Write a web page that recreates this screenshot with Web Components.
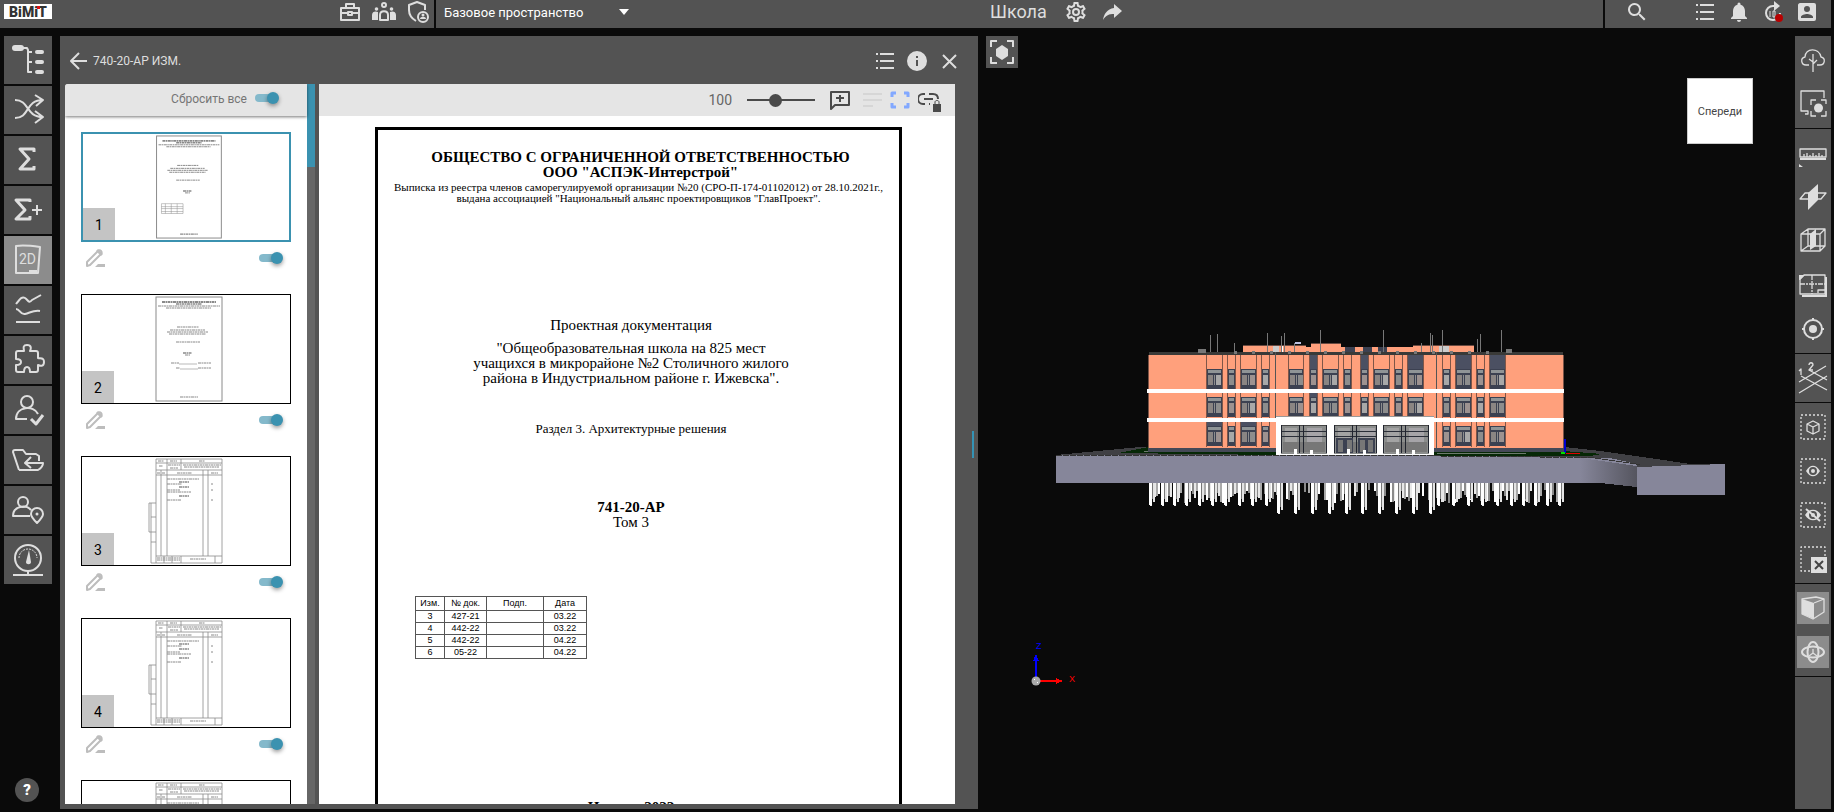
<!DOCTYPE html>
<html lang="ru">
<head>
<meta charset="utf-8">
<title>BiMiT — Школа</title>
<style>
  html, body { margin: 0; height: 100%; background: #0a0a0a; }
  body { font-family: Roboto, "Liberation Sans", sans-serif; font-size: 13px; color: #dedede; overflow: hidden; }
</style>
</head>
<body>
<bim-app></bim-app>

<script>
const ICONS = {
  /* header, 24px grid */
  briefcase: '<path d="M3 8h18v12H3zM8 8V4h8v4M3 13h7M14 13h7M10 12h4v3h-4z"/>',
  people: '<circle cx="12" cy="5" r="2"/><path d="M8 20v-5c0-5 8-5 8 0v5z"/><g class="f"><circle cx="4.500" cy="9" r="1.800"/><circle cx="19.500" cy="9" r="1.800"/><path d="M0 20v-5c0-4 4-4 6-3v8zM24 20v-5c0-4-4-4-6-3v8z"/></g>',
  shield: '<path d="M10 21C5 18 3 14 3 10V5l8-3 8 3v5"/><circle cx="17" cy="17" r="5"/><g class="f"><circle cx="17" cy="15" r="1.500"/><path d="M14 19c0-3 6-3 6 0z"/></g>',
  gear: '<path class="f" fill-rule="evenodd" d="M19.430 12.980c.040-.320.070-.640.070-.980 0-.340-.030-.660-.070-.980l2.110-1.650c.190-.150.240-.420.120-.640l-2-3.460c-.090-.160-.260-.250-.440-.250-.060 0-.120.010-.170.030l-2.490 1c-.520-.400-1.080-.730-1.690-.980l-.380-2.650C14.460 2.180 14.250 2 14 2h-4c-.250 0-.460.180-.490.420l-.380 2.650c-.610.250-1.170.590-1.690.980l-2.490-1c-.060-.020-.120-.030-.180-.030-.170 0-.340.090-.430.250l-2 3.460c-.130.220-.070.490.120.640l2.110 1.650c-.040.320-.070.650-.070.980 0 .330.030.660.070.980l-2.110 1.650c-.190.150-.240.420-.120.640l2 3.460c.090.160.260.250.440.250.060 0 .120-.010.170-.030l2.490-1c.520.400 1.080.730 1.690.980l.380 2.650c.030.240.240.420.490.420h4c.250 0 .460-.180.490-.420l.380-2.650c.610-.250 1.170-.590 1.690-.980l2.490 1c.060.020.120.030.180.030.170 0 .340-.090.430-.250l2-3.460c.120-.220.070-.490-.120-.640zM17.450 12.730l-.140 1.130 1.970 1.540-.700 1.210-2.310-.930-.900.680c-.430.320-.840.560-1.250.730l-1.060.430-.360 2.480h-1.400l-.350-2.480-1.060-.430c-.430-.180-.830-.410-1.230-.710l-.910-.700-2.330.940-.700-1.210 1.970-1.540-.140-1.130c-.040-.490-.040-.980 0-1.470l.140-1.130-1.970-1.540.700-1.210 2.310.930.900-.680c.430-.320.840-.560 1.250-.730l1.060-.430.360-2.480h1.390l.350 2.480 1.060.430c.430.180.830.410 1.230.710l.910.700 2.330-.940.700 1.210-1.960 1.550.140 1.130c.040.490.040.980 0 1.460z"/><circle cx="12" cy="12" r="3"/>',
  share: '<path class="f" d="M14 4l8 7-8 7v-4c-5 0-8 1-11 6 1-6 4-11 11-12z"/>',
  caret: '<path class="f" d="M7 9h10l-5 6z"/>',
  search: '<path class="f" d="M15.500 14h-.790l-.280-.270A6.500 6.500 0 1 0 13.730 14.430l.270.280v.790l5 5L20.500 19zM9.500 14A4.500 4.500 0 1 1 9.500 5a4.500 4.500 0 0 1 0 9z"/>',
  list: '<path class="f" d="M3 4h2v2H3zM7 4h14v2H7zM3 11h2v2H3zM7 11h14v2H7zM3 18h2v2H3zM7 18h14v2H7z"/>',
  bell: '<path class="f" d="M12 22a2 2 0 0 0 2-2h-4c0 1.100.900 2 2 2zM18 16v-5c0-3.070-1.630-5.640-4.500-6.320V4a1.500 1.500 0 0 0-3 0v.680C7.640 5.360 6 7.920 6 11v5l-2 2v1h16v-1z"/>',
  timer: '<path d="M19 13a7 7 0 1 1-7-7h3"/><path class="f" d="M13 1l6 5-6 5z"/><path d="M9 11v6M12 11h2v6h-2z" stroke-width="1"/><circle cx="18" cy="18" r="4" style="fill:#b80000;stroke:none"/>',
  account: '<path class="f" fill-rule="evenodd" d="M5 3h14a2 2 0 0 1 2 2v14a2 2 0 0 1-2 2H5a2 2 0 0 1-2-2V5c0-1 1-2 2-2zM15 9a3 3 0 1 0-6 0 3 3 0 0 0 6 0zM6 18h12v-1c0-2-4-3-6-3s-6 1-6 3z"/>',
  back: '<path d="M20 12H5M12 4l-8 8 8 8"/>',
  info: '<path class="f" fill-rule="evenodd" d="M12 2a10 10 0 1 0 0 20 10 10 0 0 0 0-20zM13 17h-2v-6h2zM13 9h-2V7h2z"/>',
  close: '<path d="M6 6l13 13M19 6L6 19"/>',
  pen: '<path d="M4 20v-4L15 5c2-2 5 1 3 3L7 19l-3 1z"/><path class="f" d="M15 3l5 5-2 2-5-5zM15 18h7v3H12z"/>',
  comment: '<path d="M3 21V4h18v13H7z"/><path d="M12 7v7M8 10h8"/>',
  lines: '<path d="M5 6h19M5 12h19M5 18h10"/>',
  fit: '<path d="M4 9V5h4M16 5h4v4M20 15v4h-4M8 19H4v-4" stroke-width="3"/>',
  linklock: '<path d="M7 6H5a5 5 0 0 0 0 10h2M11 6h4c3 0 5 2 5 5M6 11h9M11 16h1"/><path class="f" d="M15 16h8v8h-8z"/><path d="M17 16v-2c0-2 4-2 4 0v2" stroke-width="1"/>',
  focus: '<path d="M5 11V5h6M21 5h6v6M27 21v6h-6M11 27H5v-6"/><path class="f" d="M16 9l6 4v7l-6 4-6-4v-7z"/>',
  /* left rail, 48px grid */
  tree: '<rect class="f" x="8" y="9" width="12" height="6" rx="3"/><path d="M19 12h4l1 2v22h4M24 16h4M24 26h4"/><g class="f"><rect x="31" y="14" width="9" height="4" rx="2"/><rect x="31" y="24" width="9" height="4" rx="2"/><rect x="31" y="34" width="9" height="4" rx="2"/></g>',
  shuffle: '<path d="M11 14c15 0 10 17 28 17M11 32c15 0 10-18 28-18M31 9l8 5-7 6M31 25l8 6-8 6"/>',
  sigma: '<path d="M30 16v-3H16l9 10-9 10h14v-3" stroke-width="3"/>',
  sigmaplus: '<path d="M26 16v-2H12l9 10-9 9h14v-3" stroke-width="3"/><path d="M33 19v10M28 24h10"/>',
  plan2d: '<path d="M12 10c6-1 17 0 24 1l-2 26H12zM25 35h8"/><text x="15" y="28" font-size="14" class="f">2D</text>',
  charts: '<path d="M12 18c4-5 6-8 9-6s4 6 7 2l9-5M12 23c4 0 4 6 9 5s8-4 15-3M12 36h24"/>',
  puzzle: '<path d="M12 17q0-2 2-2h6c0-2-2-6 3-6s4 4 3 6h6q2 0 2 2v5c2 1 6-1 6 4s-4 4-6 3v5q0 2-2 2h-6c0-2 0-5-3-5s-3 3-3 5h-6q-2 0-2-2v-5c2 0 5 0 5-3s-3-3-5-3z"/>',
  usercheck: '<circle cx="23" cy="16" r="6"/><path d="M23 33H12c0-13 18-14 22-5"/><path d="M27 33l5 5 7-9" stroke-width="3"/>',
  folder: '<path d="M15 34L9 16q0-2 2-2h8l3 4h10l3 2v5M15 34h19q5-3 5-7H22M27 21l-6 6 6 5"/>',
  userpin: '<circle cx="19" cy="16" r="5"/><path d="M26 30H9c0-10 13-12 18-6M33 37c-4-4-6-6-6-9a6 6 0 0 1 12 0c0 3-3 6-6 9z"/><circle class="f" cx="33" cy="28" r="1.500"/>',
  gauge: '<circle cx="24" cy="22" r="13"/><path d="M24 35v4M9 39h30"/><path d="M15 22a9 9 0 0 1 18 0" stroke-dasharray="2 1" stroke-width="1"/><path class="f" d="M25 14l2 12c0 3-5 3-5 0z"/>',
  /* right rail, 32px grid */
  leaf: '<path d="M12 21H9c-5 0-6-7-1-8 0-9 14-10 16 0 5 1 4 8-1 8h-3M16 10v18M16 18l-4-3M16 20l4-4"/>',
  screen: '<path d="M27 10V3H4v20h7v3H8"/><path d="M14 17v-5h5M24 12h5v4M29 23v5h-5M19 28h-5v-5"/><circle class="f" cx="21.500" cy="20" r="4.500"/>',
  ruler: '<path d="M3 12h26v8H3zM7 20v-3M10 20v-4M13 20v-2M16 20v-4M19 20v-2M22 20v-4M25 20v-2"/><path class="f" d="M3 21h26v2H3zM2 27l4 3H2z"/>',
  section: '<path d="M3 18h21l5-6H8z"/><path class="f" d="M11 12l10-9v16L11 29z"/>',
  clip: '<path d="M4 9l7-5h17v17l-5 5H4zM4 9h19v17M23 9l5-5M11 4v17L4 26M11 21h17"/><path class="f" d="M13 9l6-5v17l-6 4z"/>',
  sheet: '<path d="M3 10l4-4h21v19H3z"/><path d="M3 15h25M15 6v19" stroke-dasharray="5 1 2 1"/><path class="f" d="M5 26h23V8h2v20H5zM2 6h6l-5 5H2z"/><path d="M21 24v-3h7"/>',
  target: '<circle cx="16" cy="16" r="9" stroke-width="2"/><circle class="f" cx="16" cy="16" r="4"/><path d="M16 5v3M16 24v3M5 16h3M24 16h3" stroke-width="2"/>',
  grid: '<path d="M2 31L30 14M2 20L29 4M4 14l26 14M12 8l18 10"/><path d="M2 9l2-2v6M12 3c0-3 4-3 4 0l-4 5h4"/>',
  cube: '<path d="M4 4h24v24H4z" stroke-dasharray="2 2"/><path d="M16 10l6 3v7l-6 3-6-3v-7zM10 13l6 3 6-3M16 16v7"/>',
  eye: '<path d="M4 4h24v24H4z" stroke-dasharray="2 2"/><path class="f" fill-rule="evenodd" d="M9 16c4-7 10-7 14 0-4 7-10 7-14 0zM20 16a4 4 0 1 0-8 0 4 4 0 0 0 8 0z"/><circle class="f" cx="16" cy="16" r="2"/>',
  eyeoff: '<path d="M4 4h24v24H4z" stroke-dasharray="2 2"/><path class="f" fill-rule="evenodd" d="M8 16c4-7 12-7 16 0-4 7-12 7-16 0zM20 16a4 4 0 1 0-8 0 4 4 0 0 0 8 0z"/><circle class="f" cx="16" cy="16" r="2"/><path d="M9 10l14 12" stroke-width="2"/>',
  clearsel: '<path d="M13 28H4V4h24v9" stroke-dasharray="2 2"/><path class="f" d="M14 14h16v16H14z"/><path d="M18 18l8 8M26 18l-8 8" style="stroke:#444;stroke-width:2"/>',
  solid: '<path d="M5 7l14-2 8 2v13l-11 7-11-5z"/><path class="f" d="M5 7l12 4v16L5 22z"/><path d="M17 11l10-4"/>',
  orbit: '<ellipse cx="16" cy="16" rx="11" ry="5.500" stroke-width="2"/><ellipse cx="16" cy="16" rx="5.500" ry="10" stroke-width="2"/><path d="M16 13v4l-4 3M16 17l4 3"/>'
};

const define = (name, html, setup) => {
  const tpl = document.createElement('template');
  tpl.innerHTML = html;
  customElements.define(name, class extends HTMLElement {
    constructor() {
      super();
      this.attachShadow({ mode: 'open' }).append(tpl.content.cloneNode(true));
    }
    connectedCallback() { if (setup && !this.ready) { this.ready = true; setup(this, this.shadowRoot); } }
  });
};

/* <ui-icon name box size weight> */
define('ui-icon', `
<style>
  :host { display: block; flex: none; }
  svg { display: block; fill: none; stroke: currentColor; stroke-linejoin: round; font-family: Roboto, sans-serif; }
  .f { fill: currentColor; stroke: none; }
</style><svg aria-hidden="true"></svg>`, (el, root) => {
  const svg = root.querySelector('svg');
  const box = el.getAttribute('box') || 24, size = el.getAttribute('size') || box;
  svg.setAttribute('viewBox', `0 0 ${box} ${box}`);
  svg.setAttribute('width', size); svg.setAttribute('height', size);
  svg.setAttribute('stroke-width', el.getAttribute('weight') || 2);
  svg.innerHTML = ICONS[el.getAttribute('name')];
});

/* Flat button with an icon in its slot */
define('ui-button', `
<style>
  :host { display: block; flex: none; }
  button { display: grid; place-items: center; width: 100%; height: 100%; margin: 0; padding: 0; border: 0; border-radius: inherit;
    background: var(--button-bg, none); color: inherit; font: inherit; cursor: pointer; }
</style><button type="button"><slot></slot></button>`, (el, root) => {
  root.querySelector('button').setAttribute('aria-label', el.getAttribute('label') || '');
});

/* Switch with an optional caption */
define('ui-switch', `
<style>
  :host { display: block; }
  label { display: flex; align-items: center; gap: 8px; cursor: pointer; }
  input { appearance: none; position: relative; width: 24px; height: 12px; margin: 0; }
  input::before { content: ""; position: absolute; inset: 2px 4px 2px 0; border-radius: 4px; background: #84b9cb; }
  input::after { content: ""; position: absolute; right: 0; top: 0; width: 12px; height: 12px; border-radius: 50%;
    background: #3b92b0; box-shadow: 0 2px 4px #0006; }
</style><label><slot></slot><input type="checkbox" role="switch" checked></label>`, (el, root) => {
  if (el.hasAttribute('label')) root.querySelector('input').setAttribute('aria-label', el.getAttribute('label'));
});

define('bim-logo', `
<style>
  :host { display: block; width: 48px; height: 15px; background: #fff; }
  svg { display: block; }
  text { font: 900 14px Roboto, sans-serif; fill: #333; }
</style>
<svg width="48" height="15" role="img" aria-label="BiMiT"><text x="24" y="13" text-anchor="middle">BiMiT</text><path d="M33 2h3v3h-3z" fill="#e01010"/></svg>`);

define('bim-header', `
<style>
  :host { display: grid; grid-template-columns: minmax(0, 978fr) minmax(0, 853fr); height: 28px; margin-right: 3px; background: #535353; color: #dedede; }
  .half, .left, .tools, .title, .space { display: flex; }
  .left { box-sizing: border-box; width: 434px; padding: 4px 4px 0; justify-content: space-between; align-items: flex-start; }
  .tools { gap: 10px; margin-top: -4px; }
  .space { border-left: 2px solid #0a0a0a; align-items: flex-start; }
  select { appearance: none; width: 168px; height: 26px; margin: 0 0 0 8px; padding: 0; border: 0; background: none; color: #fff; font: 13px/26px Roboto, sans-serif; }
  option { color: #222; }
  .title { flex: 1; gap: 12px; padding-left: 12px; align-items: flex-start; }
  h1 { margin: 0 5px 0 0; font: 18px/24px Roboto, sans-serif; }
  .right { display: flex; box-sizing: border-box; width: 228px; border-left: 2px solid #0a0a0a; padding-left: 20px; gap: 10px; }
  .right > :first-child { margin-right: 34px; }
  ui-button { height: 24px; }
  .caret { color: #fff; pointer-events: none; }
</style>
<div class="half">
  <div class="left"><bim-logo></bim-logo>
    <div class="tools">
      <ui-button label="Портфель"><ui-icon name="briefcase"></ui-icon></ui-button>
      <ui-button label="Участники"><ui-icon name="people"></ui-icon></ui-button>
      <ui-button label="Права"><ui-icon name="shield"></ui-icon></ui-button>
    </div>
  </div>
  <div class="space"><select aria-label="Пространство"><option>Базовое пространство</option></select><ui-icon class="caret" name="caret"></ui-icon></div>
</div>
<div class="half">
  <div class="title"><h1>Школа</h1>
    <ui-button label="Настройки"><ui-icon name="gear"></ui-icon></ui-button>
    <ui-button label="Поделиться"><ui-icon name="share"></ui-icon></ui-button>
  </div>
  <div class="right">
    <ui-button label="Поиск"><ui-icon name="search"></ui-icon></ui-button>
    <ui-button label="Список"><ui-icon name="list"></ui-icon></ui-button>
    <ui-button label="Уведомления"><ui-icon name="bell"></ui-icon></ui-button>
    <ui-button label="Обновление"><ui-icon name="timer"></ui-icon></ui-button>
    <ui-button label="Профиль"><ui-icon name="account"></ui-icon></ui-button>
  </div>
</div>`);

define('left-rail', `
<style>
  :host { display: flex; flex-direction: column; padding: 0 8px 0 4px; gap: 2px; color: #dedede; }
  ui-button { height: 48px; --button-bg: #535353; }
  ui-button.active { --button-bg: #8c8c8c; }
  .help { width: 24px; height: 24px; margin: auto auto 7px 11px; border-radius: 50%; font: 900 15px/24px Roboto, sans-serif; color: #fff; }
</style>`, (el, root) => {
  const items = [['tree', 'Дерево'], ['shuffle', 'Связи'], ['sigma', 'Сумма'], ['sigmaplus', 'Расчёт'], ['plan2d', 'Чертежи'],
    ['charts', 'Графики'], ['puzzle', 'Модули'], ['usercheck', 'Согласование'], ['folder', 'Файлы'], ['userpin', 'Позиции'], ['gauge', 'Показатели']];
  root.innerHTML += items.map(([n, l]) =>
    `<ui-button label="${l}" class="${n === 'plan2d' ? 'active' : ''}"><ui-icon name="${n}" box="48"></ui-icon></ui-button>`).join('') +
    '<ui-button class="help" label="Справка">?</ui-button>';
});

define('right-rail', `
<style>
  :host { display: flex; flex-direction: column; background: #535353; color: #dedede; }
  div { display: flex; flex-direction: column; padding: 2px 0; border-bottom: 1px solid #0a0a0a; }
  ui-button { height: 32px; margin: 6px 2px; }
  ui-button.active { --button-bg: #8c8c8c; }
</style>`, (el, root) => {
  const groups = [[['leaf', 'Окружение'], ['screen', 'Снимок вида']],
    [['ruler', 'Измерение'], ['section', 'Сечение'], ['clip', 'Объём отсечения'], ['sheet', 'Лист'], ['target', 'Центр']],
    [['grid', 'Оси']],
    [['cube', 'Выделенное'], ['eye', 'Показать'], ['eyeoff', 'Скрыть'], ['clearsel', 'Снять выделение']],
    [['solid', 'Тонирование', 1], ['orbit', 'Вращение', 1]]];
  root.innerHTML += groups.map(g => '<div>' + g.map(([n, l, a]) =>
    `<ui-button label="${l}" class="${a ? 'active' : ''}"><ui-icon name="${n}" box="32" weight="1.3"></ui-icon></ui-button>`).join('') + '</div>').join('');
});

/* Miniature of a sheet: kind = cover | sign | table */
const rows = (list) => list.map(([y, a, b, w]) => `<path d="M${a} ${y}H${b}" stroke-width="${w || 1}" stroke-dasharray="3 .500 1.500 .500"/>`).join('');
const miniature = kind => {
  if (kind !== 'table') return `<rect x="74" y="2" width="66" height="104" stroke-width="1"/>` +
    rows([[7, 80, 134, 2], [9, 94, 120, 1.5], [11, 76, 138], [13, 84, 129], [32, 95, 117], [35, 88, 123], [37, 85, 126], [39, 87, 124],
      [47, 94, 118], [58, 101, 110, 1.5], [60, 103, 108], [102, 98, 116, 1.2]]) +
    (kind === 'cover' ? '<path d="M79 71h22v10H79zM79 74h22M79 76h22M79 79h22M83 71v10M89 71v10M95 71v10" stroke-width=".500"/>'
      : rows([[68, 89, 97], [68, 116, 129], [73, 94, 98], [73, 116, 129]]) + '<path d="M97 69h18M98 74h18" stroke-width=".600"/>');
  return '<path d="M74 2h66v104H74zM74 6h66M74 13h66M74 18h66M79 13v86M85 2v97M99 2v4M121 13v86M126 13v86M74 99h66M99 6v7M67 46h7M67 46v29M69 46v60h5M67 75h7M69 60h5M69 85h5M99 99v7M133 99v7M82 99v7M90 99v7" stroke-width=".800"/>' +
    rows([[4, 76, 82], [4, 88, 95], [4, 117, 123], [9, 77, 81], [8, 86, 98], [8, 101, 139], [11, 88, 96], [10, 102, 137], [16, 75, 78], [16, 80, 83],
      [16, 95, 110], [16, 129, 136], [22, 85, 117], [25, 97, 107, 1.5], [27, 85, 100], [30, 97, 107, 1.5], [33, 85, 98], [35, 85, 109], [39, 97, 107, 1.5], [43, 85, 99],
      [27, 129, 131], [33, 129, 131], [43, 129, 131], [102, 108, 124], [101, 75, 98], [103, 75, 98]]);
};
define('sheet-card', `
<style>
  :host { display: block; margin-bottom: 20px; }
  button { position: relative; display: block; box-sizing: border-box; width: 100%; height: 110px; padding: 0; border: 1px solid #000; background: #fff; overflow: hidden; }
  :host([selected]) button { border: 2px solid #3b92b0; }
  svg { display: block; width: 100%; height: 100%; fill: none; stroke: #8a8a8a; }
  span { position: absolute; left: 0; bottom: 0; width: 32px; height: 32px; background: #c4c4c4; color: #000; font: 14px/34px Roboto, sans-serif; text-align: center; }
  .row { display: flex; justify-content: space-between; align-items: center; height: 32px; padding: 0 8px 0 2px; color: #bdbdbd; }
</style>
<button type="button"><svg viewBox="0 0 208 108"></svg><span><slot></slot></span></button>
<div class="row"><ui-button label="Изменить"><ui-icon name="pen"></ui-icon></ui-button><ui-switch label="Показывать лист"></ui-switch></div>`,
(el, root) => { root.querySelector('svg').innerHTML = miniature(el.getAttribute('kind')); });

define('sheet-list', `
<style>
  :host { display: grid; grid-template: 32px minmax(0, 1fr) / minmax(0, 1fr) 8px; background: #fff; border-radius: 3px 0 0 0; overflow: hidden; }
  header { position: relative; z-index: 1; display: flex; justify-content: flex-end; align-items: flex-start; padding-right: 28px; background: #e5e5e5; box-shadow: 0 1px 3px #0008; }
  ui-switch { margin-top: 2px; font: 12px/24px Roboto, sans-serif; color: #757575; }
  ui-switch span { display: block; padding-top: 2px; line-height: 22px; }
  .bar { grid-column: 2; grid-row: 1 / 3; background: #666; }
  .bar i { display: block; height: 83px; background: #3b92b0; }
  .cards { overflow: hidden; padding: 16px 16px 0; }
</style>
<header><ui-switch><span>Сбросить все</span></ui-switch></header>
<div class="bar"><i></i></div>
<div class="cards">
  <sheet-card kind="cover" selected>1</sheet-card>
  <sheet-card kind="sign">2</sheet-card>
  <sheet-card kind="table">3</sheet-card>
  <sheet-card kind="table">4</sheet-card>
  <sheet-card kind="table"></sheet-card>
</div>`);

define('doc-page', `
<style>
  :host { display: block; overflow: hidden; background: #fff; padding: 11px 53px 0 56px; color: #000; font: 15px/15px "Liberation Serif", serif; text-align: center; }
  article { border: 3px solid #000; height: 740px; white-space: nowrap; }
  h2, p { margin: 0; font-size: inherit; }
  .firm { padding: 20px 0 0 4px; }
  .small { font-size: 11px; line-height: 11px; margin-top: 2px; }
  .body { padding: 114px 15px 0 0; }
  .name { margin-top: 8px; }
  .part { margin-top: 35px; font-size: 13px; }
  .code { margin-top: 64px; }
  table { border-collapse: collapse; table-layout: fixed; width: 171px; margin: 66px 0 0 37px; font: 9px/11px "Liberation Sans", sans-serif; }
  th, td { box-sizing: border-box; height: 12px; padding: 0; border: 1px solid #555; font-weight: normal; }
  th { height: 14px; }
  .city { margin-top: 141px; font-weight: bold; padding-right: 15px; }
</style>
<article>
  <div class="firm"><h2>ОБЩЕСТВО С ОГРАНИЧЕННОЙ ОТВЕТСТВЕННОСТЬЮ<br>ООО "АСПЭК-Интерстрой"</h2></div>
  <p class="small">Выписка из реестра членов саморегулируемой организации №20 (СРО-П-174-01102012) от 28.10.2021г.,<br>выдана ассоциацией "Национальный альянс проектировщиков "ГлавПроект".</p>
  <div class="body">
    <p>Проектная документация</p>
    <p class="name">"Общеобразовательная школа на 825 мест<br>учащихся в микрорайоне №2 Столичного жилого<br>района в Индустриальном районе г. Ижевска".</p>
    <p class="part">Раздел 3. Архитектурные решения</p>
    <p class="code"><b>741-20-АР</b><br>Том 3</p>
  </div>
  <table>
    <colgroup><col width="29"><col width="42"><col width="57"><col width="43"></colgroup>
    <thead><tr><th>Изм.</th><th>№ док.</th><th>Подп.</th><th>Дата</th></tr></thead>
    <tbody>
      <tr><td>3</td><td>427-21</td><td></td><td>03.22</td></tr>
      <tr><td>4</td><td>442-22</td><td></td><td>03.22</td></tr>
      <tr><td>5</td><td>442-22</td><td></td><td>04.22</td></tr>
      <tr><td>6</td><td>05-22</td><td></td><td>04.22</td></tr>
    </tbody>
  </table>
  <p class="city">г. Ижевск 2022 г.</p>
</article>`);

define('doc-panel', `
<style>
  :host { display: grid; grid-template: 48px minmax(0, 1fr) / 250px minmax(0, 1fr) 19px; column-gap: 4px; padding: 0 0 5px 5px; background: #535353; color: #dedede; }
  header { grid-column: 1 / 4; display: flex; align-items: center; padding: 2px 17px 0 2px; gap: 8px; }
  h1 { flex: 1; margin: 0 0 0 -6px; font: 12px/20px Roboto, sans-serif; }
  .doc { display: flex; flex-direction: column; min-height: 0; }
  .bar { display: flex; align-items: center; justify-content: flex-end; gap: 6px; height: 32px; padding-right: 13px; background: #e5e5e5; color: #4a4a4a; flex: none; }
  output { font: 14px/32px Roboto, sans-serif; color: #666; margin-right: 9px; }
  input { appearance: none; width: 68px; height: 12px; margin: 0 7px 0 0; background: linear-gradient(#4a4a4a, #4a4a4a) center / 100% 2px no-repeat; }
  input::-webkit-slider-thumb { appearance: none; width: 13px; height: 13px; border-radius: 50%; background: #4a4a4a; }
  .off { color: #d6d6d6; }
  .on { color: #82a8ff; }
  doc-page { flex: 1; min-height: 0; }
  .grip { align-self: center; width: 2px; height: 27px; margin-left: 13px; background: #3493b5; }
</style>
<header>
  <ui-button label="Назад"><ui-icon name="back"></ui-icon></ui-button>
  <h1>740-20-АР ИЗМ.</h1>
  <ui-button label="Список"><ui-icon name="list"></ui-icon></ui-button>
  <ui-button label="Сведения"><ui-icon name="info"></ui-icon></ui-button>
  <ui-button label="Закрыть"><ui-icon name="close"></ui-icon></ui-button>
</header>
<sheet-list></sheet-list>
<div class="doc">
  <div class="bar">
    <output for="zoom">100</output>
    <input id="zoom" type="range" min="10" max="230" value="100" aria-label="Масштаб">
    <ui-button label="Комментарий"><ui-icon name="comment"></ui-icon></ui-button>
    <ui-button class="off" label="Замечания"><ui-icon name="lines"></ui-icon></ui-button>
    <ui-button class="on" label="Вписать"><ui-icon name="fit"></ui-icon></ui-button>
    <ui-button label="Связь закреплена"><ui-icon name="linklock"></ui-icon></ui-button>
  </div>
  <doc-page></doc-page>
</div>
<div class="grip"></div>`);

/* Front elevation of the school, in model-view units */
const R = (x, y, w, h, f) => `<rect x="${x}" y="${y}" width="${w}" height="${h}" fill="${f}"/>`;
function drawSchool() {
  let s = '';
  const noise = i => { const v = Math.sin(i * 127.1) * 43758.5; return v - Math.floor(v); };
  const bottoms = [[1149, 506], [1161, 506], [1173, 506], [1185, 506], [1198, 506], [1211, 506], [1224, 506], [1238, 506], [1251, 506], [1265, 506],
    [1277, 514], [1294, 514], [1311, 514], [1328, 514], [1345, 514], [1361, 514], [1378, 514], [1395, 514], [1412, 514], [1429, 514],
    [1437, 506], [1452, 506], [1467, 506], [1481, 506], [1496, 506], [1510, 506], [1522, 506], [1534, 506], [1546, 506], [1558, 506]];
  const greys = ['#8b8b8b', '#e8e8e8', '#aaa', '#fff'];
  for (let x = 1152, i = 0; x < 1560; x += 2, i++) {
    const centre = x > 1290 && x < 1430;
    if (noise(i) > (centre ? .6 : .9)) continue;
    const b = 490 + noise(i + 50) * 13;
    s += R(x, 483, 2, b - 483, greys[i % 4]);
  }
  bottoms.forEach(([x, b]) => {
    s += R(x, 483, 3, b - 484, '#fff') + R(x + 3, 483, 1, b - 490, '#777') + R(x + 4, 483, 2, b - 487, '#e4e4e4') + R(x + 1, b - 1, 2, 1, '#eee');
  });
  s += '<path d="M1056 455l84-8h424l36 4 50 7 40 6h35v4l-88 3-60-12h-521z" fill="#404044"/>';
  s += '<path d="M1118 453l30-6h130v8zM1434 451h130l38 3-12 2h-156z" fill="#062806"/><path d="M1144 451h110M1436 453l90 1" stroke="#6d7a6d"/>';
  s += '<path d="M1056 455h334l220 3 27 6v23l-37-4H1056z" fill="#86869a"/><path d="M1580 458l57 8v21l-37-4h-20z" fill="url(#slab)"/>';
  s += '<path d="M1056 455.500h334l200 2 50 7" fill="none" stroke="#333" stroke-dasharray="6 1"/><path d="M1637 467l88-3v31h-88z" fill="#86869a"/>';
  const wall = '#ffa07c', dark = '#3c4151';
  s += R(1243, 346, 63, 9, wall) + R(1306, 347, 6, 8, wall) + R(1311, 344, 30, 11, wall) + R(1341, 347, 72, 8, wall) + R(1413, 345, 61, 10, wall);
  s += R(1243, 345, 63, 1, '#6a4a40') + R(1311, 343, 30, 1, '#6a4a40') + R(1413, 345, 61, 1, '#6a4a40');
  [[1345, 10], [1363, 9], [1378, 9]].forEach(([x, w]) => s += R(x, 347, w, 8, dark));
  s += R(1273, 346, 6, 8, '#ccc') + R(1281, 346, 2, 8, '#fff') + R(1284, 346, 1, 8, '#fff') + R(1439, 346, 10, 8, '#ccc') + R(1295, 342, 6, 2, '#bcc0e0');
  [[1210, 335], [1217, 334], [1234, 343], [1267, 333], [1281, 336], [1284, 333], [1294, 343], [1320, 330], [1383, 330], [1421, 343], [1430, 333], [1432, 335], [1442, 330],
    [1477, 339], [1480, 334], [1501, 330]].forEach(([x, y]) => s += R(x, y, 1, 354 - y, '#777'));
  s += R(1149, 352, 414, 3, '#3a3a38') + R(1198, 349, 8, 4, '#777') + R(1506, 349, 6, 4, '#777');
  for (let x = 1234; x < 1500; x += 18) s += R(x, 351, 3, 3, '#777');
  s += R(1148, 355, 416, 93, wall) + R(1148, 448, 416, 4, '#454957') + R(1147.5, 355, 1, 93, '#7c5346') + R(1563, 355, 1, 93, '#7c5346');
  const cols = [[1207, 15], [1228, 7], [1241, 15], [1262, 7], [1289, 14], [1310, 7], [1323, 15], [1344, 7], [1361, 7], [1374, 15], [1395, 7], [1408, 15], [1443, 7], [1456, 15], [1477, 7], [1490, 15]];
  const tops = [1310, 1361, 1408, 1456, 1490];
  cols.forEach(([x, w], i) => {
    const mid = x > 1276 && x < 1436;
    s += R(x - 1, 355, 1, mid ? 62 : 92, '#7f5648') + R(x + w, 355, 1, mid ? 62 : 92, '#7f5648');
    if (tops.includes(x)) s += R(x, 355, w, 14, '#4b5062');
    if (x === 1310) s += R(x, 393, w, 5, '#4b5062');
    if (x === 1207 || x === 1241) s += R(x, 422, w, 5, '#4b5062');
    [369, 397, 426].slice(0, mid ? 2 : 3).forEach((y, r) => {
      s += R(x, y, w, 20, dark) + R(x + 1, y + 1, w - 2, 3, '#8f9496');
      const pane = [ '#a8a8a8', '#8d8d8d', '#9d9290' ][(i + r) % 3];
      if (w > 8) s += R(x + 1, y + 6, 5, 10, '#8a8583') + R(x + 7, y + 6, 1, 10, '#8d8d8d') + R(x + 9, y + 6, 5, 10, pane);
      else s += R(x + 1, y + 6, 5, 10, pane);
    });
  });
  s += R(1275, 352, 1, 66, '#555') + R(1436, 352, 1, 96, '#555');
  s += R(1147, 389, 417, 4, '#fff') + R(1147, 418, 417, 4, '#fff');
  s += R(1276, 417, 158, 38, '#fff') + R(1276, 416, 158, 1, '#999');
  [[1281, 46], [1334, 43], [1383, 46]].forEach(([x, w], k) => {
    s += R(x, 425, w, 29, '#8b8d8c') + R(x + 4, 428, 12, 20, '#a3a3a3') + R(x + 26, 428, 15, 22, '#a6a4a8') + R(x + 2, 442, w - 4, 10, '#777');
    s += R(x, 431, w, 1, '#2a2e38') + R(x, 436, w, 1, '#2a2e38') + R(x, 425, w, 1, '#444');
    [0, 18, 22, w - 1].forEach(d => s += R(x + d, 425, 1, 28, '#20242e'));
    if (k === 1) s += R(x + 2, 438, 17, 15, dark) + R(x + 4, 440, 5, 12, '#777') + R(x + 13, 440, 5, 12, '#777') + R(x + 24, 438, 17, 15, dark) + R(x + 26, 440, 5, 12, '#777') + R(x + 34, 440, 5, 12, '#777');
    s += R(x + 13, 449, 3, 5, '#fff') + R(x + 29, 450, 3, 4, '#fff');
  });
  s += R(1564, 439, 2, 14, '#0000d0') + R(1566, 453, 14, 1, '#e00000') + R(1561, 452, 4, 2, '#00e000');
  /* axis tripod */
  s += R(1035, 660, 2, 18, '#00f') + '<path d="M1036 654l3 7h-6z" fill="#00f"/>' + R(1040, 680, 18, 2, '#f00') + '<path d="M1063 681l-7 3v-6z" fill="#f00"/><circle cx="1036" cy="681" r="4.500" fill="#a9a9a9" shape-rendering="auto"/>' + R(1034, 679, 1, 1, '#fff') + R(1037, 682, 1, 1, '#fff');
  s += '<text x="1036" y="649" fill="#00f">Z</text><text x="1069" y="682" fill="#f00">X</text>';
  return s;
}
define('model-view', `
<style>
  :host { display: block; position: relative; overflow: hidden; color: #dedede; }
  svg { display: block; width: 100%; height: 100%; }
  text { font: 9px "Liberation Sans", sans-serif; }
  .focus { position: absolute; left: 8px; top: 0; width: 32px; height: 32px; --button-bg: #535353; }
  .side { position: absolute; right: 42px; top: 42px; width: 66px; height: 66px; box-sizing: border-box; border: 1px solid #ccc; --button-bg: #fff; color: #444; font: 11px Roboto, sans-serif; }
</style>
<svg viewBox="978 36 817 773" role="img" aria-label="Модель школы"><defs><linearGradient id="slab"><stop offset="0" stop-color="#86869a"/><stop offset="1" stop-color="#55555f"/></linearGradient></defs><g shape-rendering="crispEdges"></g></svg>
<ui-button class="focus" label="Показать всё"><ui-icon name="focus" box="32"></ui-icon></ui-button>
<ui-button class="side" label="Спереди">Спереди</ui-button>`,
(el, root) => { root.querySelector('g').innerHTML = drawSchool(); });

define('bim-app', `
<style>
  :host { display: grid; grid-template-rows: 28px minmax(0, 1fr); row-gap: 8px; box-sizing: border-box; height: 100vh; padding-bottom: 3px; background: #0a0a0a; }
  main { display: grid; grid-template-columns: 60px minmax(0, 918fr) minmax(0, 817fr) 36px; margin-right: 3px; min-height: 0; }
  main > * { min-height: 0; }
</style>
<bim-header></bim-header>
<main><left-rail></left-rail><doc-panel></doc-panel><model-view></model-view><right-rail></right-rail></main>`);
</script>
</body>
</html>
